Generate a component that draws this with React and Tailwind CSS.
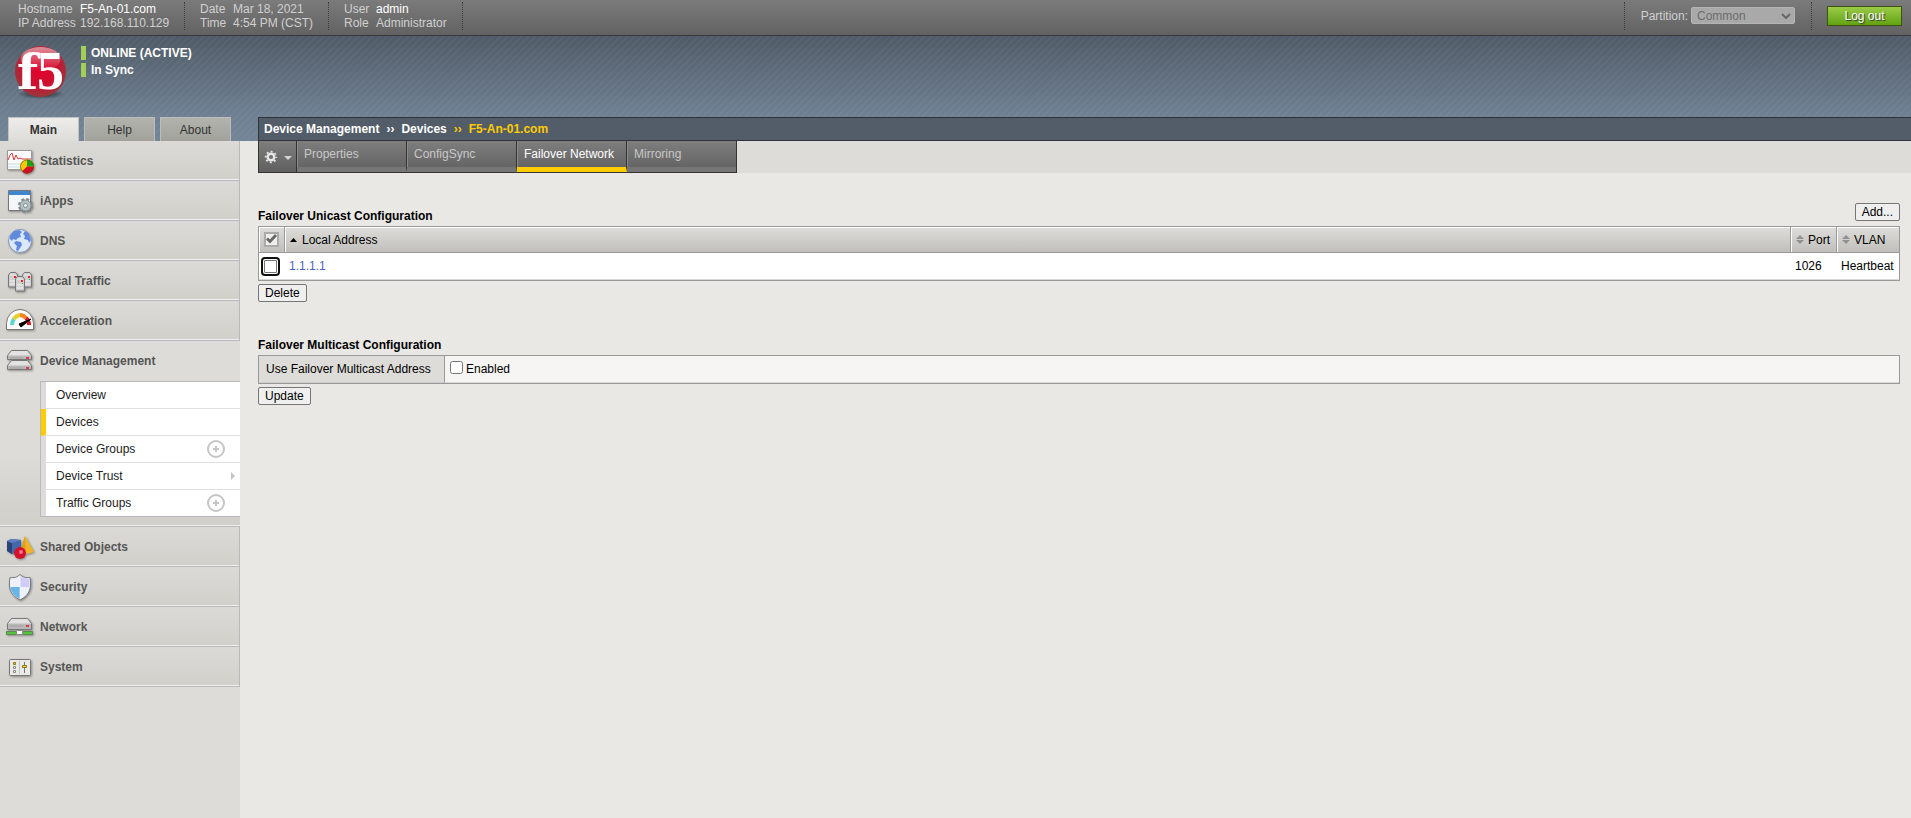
import React, { useState } from "react";

const NAV_TOP = [
  { label: "Statistics", icon: StatisticsIcon },
  { label: "iApps", icon: IAppsIcon },
  { label: "DNS", icon: DnsIcon },
  { label: "Local Traffic", icon: TrafficIcon },
  { label: "Acceleration", icon: AccelerationIcon },
];

const NAV_BOTTOM = [
  { label: "Shared Objects", icon: SharedIcon },
  { label: "Security", icon: SecurityIcon },
  { label: "Network", icon: NetworkIcon },
  { label: "System", icon: SystemIcon },
];

const SUBMENU = [
  { label: "Overview" },
  { label: "Devices", active: true },
  { label: "Device Groups", add: true },
  { label: "Device Trust", more: true },
  { label: "Traffic Groups", add: true },
];

const TABS = ["Properties", "ConfigSync", "Failover Network", "Mirroring"];

export default function App() {
  return (
    <div className="min-h-screen flex flex-col bg-[#e9e8e4] font-['Liberation_Sans',Arial,sans-serif] text-xs leading-[14px] text-black">
      <TopBar />
      <Banner />
      <div className="flex-1 flex">
        <Sidebar />
        <main className="flex-1 min-w-0 pl-[18px]">
          <TabBar />
          <div className="pr-[11px]">
            <UnicastSection />
            <MulticastSection />
          </div>
        </main>
      </div>
    </div>
  );
}

function TopBar() {
  return (
    <div className="h-9 flex justify-between bg-linear-to-b from-[#7b7b7b] to-[#626262] border-b border-[#36383c] text-[#d0d0d0] pt-[2px]">
      <div className="flex">
        <InfoBlock className="w-[185px] pl-[18px]" labelWidth="w-[62px]" rows={[["Hostname", "F5-An-01.com", true], ["IP Address", "192.168.110.129"]]} />
        <InfoBlock className="w-36 pl-[15px]" labelWidth="w-[33px]" rows={[["Date", "Mar 18, 2021"], ["Time", "4:54 PM (CST)"]]} />
        <InfoBlock className="w-[134px] pl-[15px]" labelWidth="w-8" rows={[["User", "admin", true], ["Role", "Administrator"]]} />
      </div>
      <div className="flex h-7">
        <div className="flex items-start border-x border-dotted border-[#3c3c3c] pl-4 pr-4 pt-[5px]">
          <label htmlFor="partition" className="pt-[2px]">Partition:</label>
          <div className="relative ml-[3px]">
            <select id="partition" disabled className="appearance-none block w-[104px] h-[17px] pl-[5px] bg-[#a9a9a9] border border-[#b4b4b4] rounded-xs text-[#6c6c6c] leading-[14px]">
              <option>Common</option>
            </select>
            <svg className="absolute right-1 top-[6px] pointer-events-none" width="10" height="6" viewBox="0 0 10 6" fill="none" stroke="#666" strokeWidth="2">
              <path d="M1 1l4 4 4-4" />
            </svg>
          </div>
        </div>
        <button className="ml-[15px] mr-[9px] mt-1 w-[75px] h-5 border border-[#3d5215] bg-linear-to-b from-[#9bcb45] to-[#61a30c] text-white text-shadow-[1px_1px_1px_#333]">Log out</button>
      </div>
    </div>
  );
}

function InfoBlock({ rows, labelWidth, className }) {
  return (
    <dl className={`h-7 border-r border-dotted border-[#3c3c3c] whitespace-nowrap ${className}`}>
      {rows.map(([label, value, strong]) => (
        <div key={label} className="flex">
          <dt className={labelWidth}>{label}</dt>
          <dd className={strong ? "text-white" : ""}>{value}</dd>
        </div>
      ))}
    </dl>
  );
}

function Banner() {
  return (
    <header className="bg-[repeating-linear-gradient(135deg,transparent_0_3px,rgba(255,255,255,0.03)_3px_5px),linear-gradient(#505b67,#6f8093_75%,#738497)]">
      <div className="flex h-[81px] pl-[14px] pt-[10px]">
        <Logo />
        <div className="ml-[13px] text-white font-bold">
          <div className="border-l-5 border-[#a2d057] pl-[5px] mb-[3px]">ONLINE (ACTIVE)</div>
          <div className="border-l-5 border-[#a2d057] pl-[5px]">In Sync</div>
        </div>
      </div>
      <div className="flex">
        <div className="w-60 pl-2 flex gap-[5px]">
          <button className="w-[71px] h-6 border border-b-0 border-[#c2c2bf] bg-linear-to-b from-[#eeedeb] to-[#dddcd8] font-bold text-[#333]">Main</button>
          <button className="w-[71px] h-6 border border-b-0 border-[#bcbcb8] bg-linear-to-b from-[#b3b3ae] to-[#a2a29d] text-[#333]">Help</button>
          <button className="w-[71px] h-6 border border-b-0 border-[#bcbcb8] bg-linear-to-b from-[#b3b3ae] to-[#a2a29d] text-[#333]">About</button>
        </div>
        <nav className="flex-1 ml-[18px] h-6 flex items-center gap-[7px] pl-[5px] bg-[#525d69] border border-r-0 border-[#303339] font-bold text-white">
          <a href="#device-management">Device Management</a>
          <span>››</span>
          <a href="#devices">Devices</a>
          <span className="text-[#fc0]">››</span>
          <span className="text-[#fc0]">F5-An-01.com</span>
        </nav>
      </div>
    </header>
  );
}

function Sidebar() {
  return (
    <aside className="w-60 shrink-0 bg-[#dddcd8]">
      {NAV_TOP.map((item) => <NavItem key={item.label} {...item} />)}
      <div className="bg-linear-to-b from-[#dddcd8] from-60% to-[#d0cfca] border-b border-[#b9b9bb]">
        <div className="border-b border-[#f0f0ee] pb-2">
          <a href="#device-management" className="flex items-center h-10 pl-[5px] gap-[3px] font-bold text-[#555]">
            <DeviceIcon />
            Device Management
          </a>
          <ul className="ml-10 border border-r-0 border-[#b9b9bb] bg-white divide-y divide-[#dfdfdf]">
            {SUBMENU.map((item) => <SubItem key={item.label} {...item} />)}
          </ul>
        </div>
      </div>
      {NAV_BOTTOM.map((item) => <NavItem key={item.label} {...item} />)}
    </aside>
  );
}

function NavItem({ label, icon: Icon }) {
  return (
    <div className="h-10 border-b border-r border-[#b9b9bb]">
      <a href="#nav" className="flex items-center h-[39px] pl-[5px] pt-[2px] gap-[3px] border-b border-[#f0f0ee] bg-linear-to-b from-[#dbdad6] to-[#d1d0cb] font-bold text-[#555]">
        <Icon />
        {label}
      </a>
    </div>
  );
}

function SubItem({ label, active, add, more }) {
  return (
    <li className={`flex items-center justify-between h-[27px] last:h-[26px] border-l-5 pl-[10px] text-[#222] ${active ? "border-l-[#fc0]" : "border-l-[#dcdcdc]"}`}>
      <a href="#sub">{label}</a>
      {add && (
        <button aria-label={`Create in ${label}`} className="mr-[15px]">
          <svg className="block" width="18" height="18" viewBox="0 0 18 18" fill="none" stroke="#c6c6c6" strokeWidth="2">
            <circle cx="9" cy="9" r="8" />
            <path d="M9 6v6M6 9h6" />
          </svg>
        </button>
      )}
      {more && (
        <svg className="mr-[5px]" width="4" height="8" viewBox="0 0 4 8" fill="#c4c4c4">
          <path d="M0 0l4 4-4 4z" />
        </svg>
      )}
    </li>
  );
}

function TabBar() {
  return (
    <div className="flex bg-[#dddcd8]">
      <div className="flex h-8 border-x border-b border-[#333] divide-x divide-[#333] bg-linear-to-b from-[#7e7e7e] to-[#606060]">
        <button aria-label="Options" className="w-[38px] flex items-center justify-center gap-[6px]">
          <svg width="14" height="14" viewBox="0 0 14 14" fill="none" stroke="#e6e6e6">
            <circle cx="7" cy="7" r="3.3" strokeWidth="2.4" />
            <circle cx="7" cy="7" r="5.3" strokeWidth="1.8" strokeDasharray="1.9 2.26" strokeDashoffset="0.95" />
          </svg>
          <svg className="mt-[2px]" width="8" height="4" viewBox="0 0 8 4" fill="#d4d4d4">
            <path d="M0 0h8L4 4z" />
          </svg>
        </button>
        {TABS.map((tab) => (
          <a
            key={tab}
            href="#tab"
            className={`w-[110px] last:w-[109px] border-b-5 shadow-[inset_1px_0_#8c8c8c] pl-[7px] pt-[6px] whitespace-nowrap ${tab === "Failover Network" ? "border-b-[#fc0] text-white" : "border-b-[#767676] text-[#c8c8c8]"}`}
          >
            {tab}
          </a>
        ))}
      </div>
    </div>
  );
}

function UnicastSection() {
  const [selected, setSelected] = useState(false);

  return (
    <section className="pt-[30px]">
      <div className="flex items-end justify-between">
        <h2 className="font-bold pb-[3px]">Failover Unicast Configuration</h2>
        <FormButton className="mb-[5px]">Add...</FormButton>
      </div>
      <table className="w-full border border-[#999] border-separate border-spacing-0 bg-white">
        <thead>
          <tr className="h-[26px] text-left bg-linear-to-b from-[#deddda] to-[#bfbeba]">
            <HeadCell className="w-[26px] border-r">
              <span className="relative block ml-[5px] size-[15px]">
                <input type="checkbox" aria-label="Select all" defaultChecked className="appearance-none block size-[15px] border-2 border-[#aaa] bg-[#eee]" />
                <svg className="absolute left-[2px] top-[2px] pointer-events-none" width="11" height="10" viewBox="0 0 11 10" fill="none" stroke="#666" strokeWidth="2.8">
                  <path d="M1 4.500l3 3 6-6.500" />
                </svg>
              </span>
            </HeadCell>
            <HeadCell className="border-r">
              <span className="flex items-center gap-[5px] pl-[5px]">
                <svg width="7" height="4" viewBox="0 0 7 4"><path d="M0 4h7L3.500 0z" /></svg>
                Local Address
              </span>
            </HeadCell>
            <HeadCell className="w-[46px] border-r"><Sortable>Port</Sortable></HeadCell>
            <HeadCell className="w-[62px]"><Sortable>VLAN</Sortable></HeadCell>
          </tr>
        </thead>
        <tbody>
          <tr className="h-[27px]">
            <td className="p-0 border-b border-[#d8d8d8]">
              <input
                type="checkbox"
                aria-label="Select 1.1.1.1"
                checked={selected}
                onChange={(e) => setSelected(e.target.checked)}
                className="appearance-none block ml-[5px] size-[13px] rounded-[1px] border border-[#767676] bg-white checked:bg-[#0075ff] outline-2 outline-offset-1 outline-[#101010]"
              />
            </td>
            <td className="p-0 pl-1 border-b border-[#d8d8d8]"><a href="#address" className="text-[#4a5fc0]">1.1.1.1</a></td>
            <td className="p-0 pl-1 border-b border-[#d8d8d8]">1026</td>
            <td className="p-0 pl-1 border-b border-[#d8d8d8]">Heartbeat</td>
          </tr>
        </tbody>
      </table>
      <FormButton className="mt-[3px]">Delete</FormButton>
    </section>
  );
}

function HeadCell({ className, children }) {
  return (
    <th className={`p-0 border-b border-[#999] font-normal shadow-[inset_1px_1px_#fff] ${className}`}>
      {children}
    </th>
  );
}

function Sortable({ children }) {
  return (
    <span className="flex items-center gap-1 pl-[5px]">
      <svg width="8" height="9" viewBox="0 0 8 9" fill="#909090">
        <path d="M0 4h8L4 0zM0 5h8L4 9z" />
      </svg>
      {children}
    </span>
  );
}

function MulticastSection() {
  return (
    <section className="pt-9">
      <h2 className="font-bold pb-[3px]">Failover Multicast Configuration</h2>
      <table className="w-full border border-[#999] border-separate border-spacing-0">
        <tbody>
          <tr className="h-[27px]">
            <th className="w-[186px] p-0 pl-[7px] text-left font-normal bg-[#dddcd8] border-r border-b border-r-[#999] border-b-[#ccc]">
              <label htmlFor="multicast">Use Failover Multicast Address</label>
            </th>
            <td className="p-0 pl-[5px] bg-[#f6f5f3] border-b border-[#d8d8d8]">
              <label className="flex items-center gap-[3px]">
                <input id="multicast" type="checkbox" className="size-[13px] mb-[3px]" />
                Enabled
              </label>
            </td>
          </tr>
        </tbody>
      </table>
      <FormButton className="mt-[3px]">Update</FormButton>
    </section>
  );
}

function FormButton({ className, children }) {
  return (
    <button className={`block h-[18px] px-[6px] border border-[#767676] rounded-[2px] bg-[#efefef] ${className}`}>
      {children}
    </button>
  );
}

function Logo() {
  return (
    <svg className="overflow-visible" width="54" height="56" viewBox="0 0 54 56">
      <defs>
        <radialGradient id="ball" cx="0.5" cy="0.45" r="0.55">
          <stop offset="0" stopColor="#e4002b" />
          <stop offset="0.6" stopColor="#cf1030" />
          <stop offset="1" stopColor="#96383c" />
        </radialGradient>
        <linearGradient id="shine" x1="0" y1="0" x2="0" y2="1">
          <stop offset="0" stopColor="#fff" stopOpacity="0.5" />
          <stop offset="1" stopColor="#fff" stopOpacity="0" />
        </linearGradient>
        <radialGradient id="shade">
          <stop offset="0" stopColor="#15191e" stopOpacity="0.9" />
          <stop offset="1" stopColor="#15191e" stopOpacity="0" />
        </radialGradient>
      </defs>
      <ellipse cx="27" cy="48" rx="24" ry="5" fill="url(#shade)" />
      <circle cx="26.500" cy="25.500" r="25.500" fill="url(#ball)" />
      <ellipse cx="26.500" cy="13" rx="20" ry="12" fill="url(#shine)" />
      <text x="3" y="43" fontFamily="DejaVu Serif" fontWeight="bold" fontSize="49" fill="#fff">f</text>
      <text x="23" y="43" fontFamily="Liberation Serif" fontWeight="bold" fontSize="54" fill="#fff">5</text>
    </svg>
  );
}

function NavIcon({ children }) {
  return (
    <svg className="shrink-0 drop-shadow-[1px_1px_1px_rgba(0,0,0,0.35)]" width="32" height="32" viewBox="0 0 32 32">
      {children}
    </svg>
  );
}

function StatisticsIcon() {
  return (
    <NavIcon>
      <path d="M2.500 5.500h24v19h-24z" fill="#fafafa" stroke="#999" />
      <path d="M3 19h23M3 22h23" stroke="#c5dcee" />
      <path d="M3 15l2-5 2-2 2 7 2-5 2 4 2-1 2 1h9" fill="none" stroke="#d2393f" />
      <circle cx="22" cy="21.500" r="7" fill="#f5c900" />
      <path d="M22 21.500v-7a7 7 0 0 1 7 7z" fill="#19a519" />
      <path d="M22 21.500h7a7 7 0 0 1-12 5z" fill="#d0102b" />
      <circle cx="22" cy="21.500" r="6.500" fill="none" stroke="#65461c" strokeOpacity="0.6" />
    </NavIcon>
  );
}

function IAppsIcon() {
  return (
    <NavIcon>
      <path d="M3.500 5.500h22v20h-22z" fill="#f4f7fa" stroke="#777" />
      <path d="M4 6h21v4H4z" fill="#3f86cc" />
      <circle cx="20.500" cy="20.500" r="6.500" fill="none" stroke="#7d8a8e" strokeWidth="2" strokeDasharray="3 2.100" />
      <circle cx="20.500" cy="20.500" r="5.500" fill="#b4bfc1" stroke="#7d8a8e" />
      <circle cx="20.500" cy="20.500" r="2" fill="#eee" stroke="#7c8a8f" />
    </NavIcon>
  );
}

function DnsIcon() {
  return (
    <NavIcon>
      <circle cx="15" cy="16" r="11.500" fill="#dce7fa" stroke="#7f95bd" />
      <path d="M5 11l4-5 5-1 3 2-2 2 1 3-3 1-2 2-3-1-1 2-2-2zM11 16l5 1 1 3-4 6-2-1 1-4-3-3zM20 6l4 3 2 6-2 3-1-3-4-1 1-3-2-2z" fill="#5f8ade" />
    </NavIcon>
  );
}

function Tower({ x, y }) {
  return (
    <g transform={`translate(${x} ${y})`}>
      <path d="M.5 3L2.500.5h5L9.500 3v12h-9z" fill="#cfcfcf" stroke="#777" />
      <path d="M2 3h6" stroke="#eee" />
      <path d="M2 9h6M2 12h6" stroke="#f4f4f4" />
      <path d="M6 4h2v2H6z" fill="#e22" />
      <path d="M7 7h1v1H7z" fill="#2b2" />
    </g>
  );
}

function TrafficIcon() {
  return (
    <NavIcon>
      <Tower x={3} y={7} />
      <Tower x={17} y={7} />
      <Tower x={10} y={11} />
    </NavIcon>
  );
}

function AccelerationIcon() {
  return (
    <NavIcon>
      <path d="M1.500 24.500v-6a13.500 14 0 0 1 27 0v6z" fill="#fcfcfc" stroke="#777" />
      <g fill="none" strokeWidth="4">
        <path d="M7 20a8.500 9 0 0 1 2-6" stroke="#5ed5cf" />
        <path d="M9 14a8.500 9 0 0 1 6-4" stroke="#e7cf2c" />
        <path d="M15 10a8.500 9 0 0 1 6 3" stroke="#f5851f" />
        <path d="M21 13a8.500 9 0 0 1 3 7" stroke="#dd1822" />
      </g>
      <path d="M14 19l12-5-10 8z" stroke="#000" />
    </NavIcon>
  );
}

function DriveShape({ y, height }) {
  return (
    <g transform={`translate(0 ${y})`}>
      <path d={`M2.500 5.500l4-5h16l4 5V${height - 0.5}h-24z`} fill="#e2e2e2" stroke="#777" />
      <path d={`M3 5.500h23V${height - 1}H3z`} fill="#b8b8b8" />
      <path d="M5 8h13" stroke="#a2a2a2" />
      <path d="M21 7h3v2h-3z" fill="#e13a4a" />
    </g>
  );
}

function DeviceIcon() {
  return (
    <NavIcon>
      <DriveShape y={15} height={10} />
      <DriveShape y={5} height={10} />
    </NavIcon>
  );
}

function SharedIcon() {
  return (
    <NavIcon>
      <path d="M2 10l4-2 10 1v12l-9 2-5-3z" fill="#4467aa" />
      <path d="M2 10l5 2v11l-5-3z" fill="#2a4479" />
      <path d="M2 10l5-2 9 1-9 3z" fill="#5f80bd" />
      <path d="M20 5l9 16-6 2-8-2z" fill="#f0b429" />
      <path d="M20 5l-5 15 6 2z" fill="#e0a022" />
      <circle cx="15" cy="22" r="6" fill="#d4102f" />
      <circle cx="16" cy="21" r="2" fill="#f0738c" />
    </NavIcon>
  );
}

function SecurityIcon() {
  return (
    <NavIcon>
      <path d="M15 3.500c3 3 6 3.500 10 3 1.500 9 1 17-10 22.500C4 23.500 3.500 15.500 5 6.500c4 .5 7 0 10-3z" fill="#eef0fb" stroke="#777" />
      <path d="M5.500 16H15v12c-5-2-9-7-9.500-12z" fill="#68b4e6" />
      <path d="M15 5c3 2 6 2.500 9.500 2.500V16H15z" fill="#cfcdf8" />
      <path d="M15 5v23" stroke="#fff" strokeOpacity="0.6" />
    </NavIcon>
  );
}

function NetworkIcon() {
  return (
    <NavIcon>
      <DriveShape y={7} height={12} />
      <path d="M1.500 20.500h26v3h-26z" fill="#56c43b" stroke="#5b8a50" />
      <path d="M12.500 19.500h4l1 1v3h-6v-3z" fill="#fff" stroke="#888" />
    </NavIcon>
  );
}

function SystemIcon() {
  return (
    <NavIcon>
      <rect x="4.500" y="8.500" width="21" height="16" rx="1" fill="#eaeae6" stroke="#777" />
      <path d="M14.500 10v13" stroke="#c4c4c0" />
      <path d="M8.500 11.500h2v2h-2z" fill="#e5c229" stroke="#8d7720" />
      <path d="M8.500 15.500h2v2h-2zM8.500 19.500h2v2h-2z" fill="#fff" stroke="#888" />
      <path d="M19.500 11v11" stroke="#777" />
      <path d="M17.500 14.500h4v2h-4z" fill="#f2dc35" stroke="#8d7720" />
    </NavIcon>
  );
}
